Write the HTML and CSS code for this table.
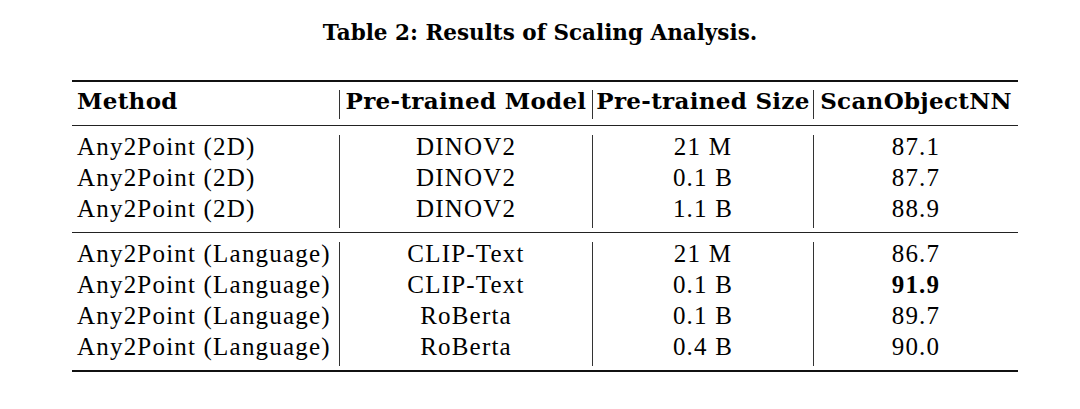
FILE: index.html
```html
<!DOCTYPE html>
<html lang="en">
<head>
  <meta charset="UTF-8">
  <title>Table 2: Results of Scaling Analysis</title>
  <link rel="stylesheet" href="styles.css">
</head>
<body>
  <!-- Caption -->
  <h1 class="caption">Table 2: Results of Scaling Analysis.</h1>

  <div class="results">
    <!-- Header -->
    <div class="section head">
      <div class="row">
        <div class="cell">Method</div>
        <div class="cell">Pre-trained Model</div>
        <div class="cell">Pre-trained Size</div>
        <div class="cell">ScanObjectNN</div>
      </div>
    </div>

    <!-- 2D models -->
    <div class="section">
      <div class="row">
        <div class="cell">Any2Point (2D)</div>
        <div class="cell">DINOV2</div>
        <div class="cell">21 M</div>
        <div class="cell">87.1</div>
      </div>
      <div class="row">
        <div class="cell">Any2Point (2D)</div>
        <div class="cell">DINOV2</div>
        <div class="cell">0.1 B</div>
        <div class="cell">87.7</div>
      </div>
      <div class="row">
        <div class="cell">Any2Point (2D)</div>
        <div class="cell">DINOV2</div>
        <div class="cell">1.1 B</div>
        <div class="cell">88.9</div>
      </div>
    </div>

    <!-- Language models -->
    <div class="section">
      <div class="row">
        <div class="cell">Any2Point (Language)</div>
        <div class="cell">CLIP-Text</div>
        <div class="cell">21 M</div>
        <div class="cell">86.7</div>
      </div>
      <div class="row">
        <div class="cell">Any2Point (Language)</div>
        <div class="cell">CLIP-Text</div>
        <div class="cell">0.1 B</div>
        <div class="cell best">91.9</div>
      </div>
      <div class="row">
        <div class="cell">Any2Point (Language)</div>
        <div class="cell">RoBerta</div>
        <div class="cell">0.1 B</div>
        <div class="cell">89.7</div>
      </div>
      <div class="row">
        <div class="cell">Any2Point (Language)</div>
        <div class="cell">RoBerta</div>
        <div class="cell">0.4 B</div>
        <div class="cell">90.0</div>
      </div>
    </div>
  </div>
</body>
</html>
```

FILE: styles.css
```css
body {
  margin: 0;
  background: #fff;
  color: #000;
}

/* Caption */
.caption {
  margin: 20px 0 35px;
  font: bold 21.5px/25px "DejaVu Serif", serif;
  text-align: center;
}

/* Table with booktabs-like rules */
.results {
  width: 946px;
  margin-left: 72px;
  border-top: 2px solid #111;
  border-bottom: 2px solid #111;
}

.section {
  padding: 9px 0 4px;
  border-bottom: 1px solid #222;
}

.section:last-child {
  border-bottom: none;
}

.section.head {
  padding: 8px 0 6px;
}

.row {
  display: grid;
  grid-template-columns: 267px 253px 221px 205px;
}

.cell {
  padding-bottom: 8px;
  border-left: 1px solid #333;
  font: 25px/23px "Liberation Serif", serif;
  letter-spacing: 1.2px;
  text-align: center;
  white-space: nowrap;
}

.cell:first-child {
  padding-left: 5px;
  border-left: none;
  text-align: left;
}

.head .cell {
  padding-bottom: 7px;
  font: bold 23px/22px "DejaVu Serif", serif;
  letter-spacing: 0.3px;
}

.cell.best {
  font-weight: bold;
}
```
